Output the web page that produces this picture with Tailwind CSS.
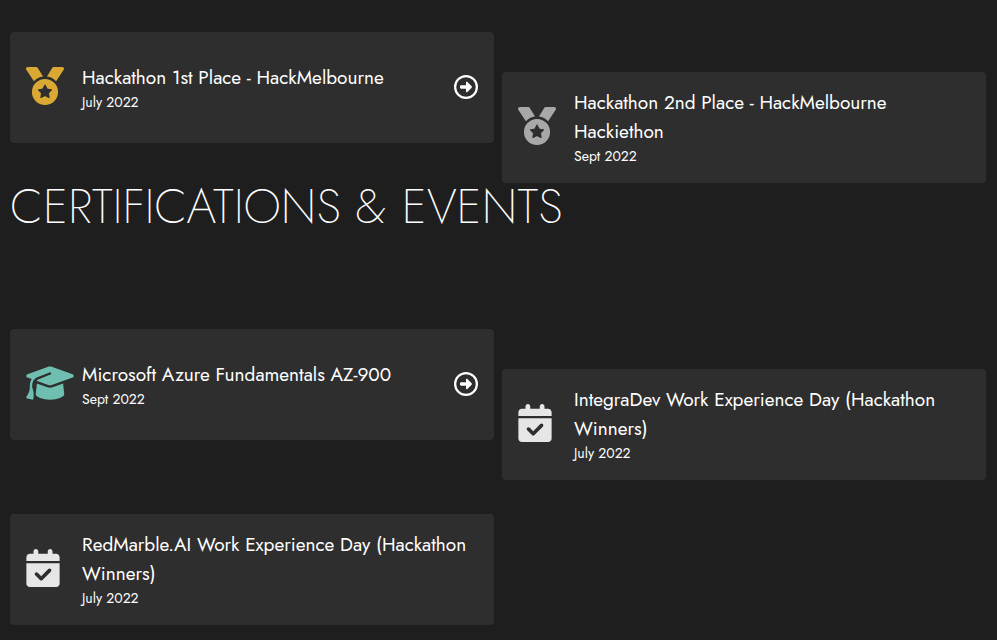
<!DOCTYPE html>
<html lang="en">
<head>
<meta charset="utf-8">
<meta name="viewport" content="width=device-width, initial-scale=1">
<title>Certifications &amp; Events</title>
<script src="https://cdn.jsdelivr.net/npm/@tailwindcss/browser@4"></script>
</head>
<body class="min-h-screen bg-[#1e1e1e] font-[Jost,Lato,sans-serif] text-white">
<svg class="hidden" aria-hidden="true">
  <symbol id="medal" viewBox="0 0 512 512"><path d="M4.1 38.2C1.4 34.2 0 29.4 0 24.6C0 11 11 0 24.6 0H133.9c11.2 0 21.7 5.9 27.4 15.5l68.5 114.1c-48.2 6.1-91.3 28.6-123.4 61.9L4.1 38.2zm503.7 0L405.6 191.5c-32.1-33.3-75.2-55.8-123.4-61.9L350.7 15.5C356.5 5.9 366.9 0 378.1 0H487.4C501 0 512 11 512 24.6c0 4.8-1.4 9.6-4.1 13.6zM80 336a176 176 0 1 1 352 0A176 176 0 1 1 80 336zm184.4-94.9c-3.4-7-13.3-7-16.8 0l-22.4 45.4c-1.4 2.8-4 4.7-7 5.1L168 298.9c-7.7 1.1-10.7 10.5-5.2 16l36.3 35.4c2.2 2.2 3.2 5.2 2.7 8.3l-8.6 49.9c-1.3 7.6 6.7 13.5 13.6 9.9l44.8-23.6c2.7-1.4 6-1.4 8.7 0l44.8 23.6c6.9 3.6 14.9-2.2 13.6-9.9l-8.6-49.9c-.5-3 .5-6.1 2.7-8.3l36.3-35.4c5.6-5.4 2.5-14.8-5.2-16l-50.1-7.3c-3-.4-5.7-2.4-7-5.1l-22.4-45.4z"/></symbol>
  <symbol id="cap" viewBox="0 0 640 512"><path d="M320 32c-8.1 0-16.1 1.4-23.7 4.1L15.8 137.4C6.3 140.9 0 149.9 0 160s6.3 19.1 15.8 22.6l57.9 20.9C57.3 229.3 48 259.8 48 291.9v28.1c0 28.4-10.8 57.7-22.3 80.8c-6.5 13-13.9 25.8-22.5 37.6C0 442.7-.9 448.3 .9 453.4s6 8.9 11.2 10.2l64 16c4.2 1.1 8.7 .3 12.4-2s6.3-6.1 7.1-10.4c8.6-42.8 4.3-81.2-2.1-108.7C90.3 344.3 86 329.8 80 316.5V291.9c0-30.2 10.2-58.7 27.9-81.5c12.9-15.5 29.6-28 49.2-35.7l157-61.7c8.2-3.2 17.5 .8 20.7 9s-.8 17.5-9 20.7l-157 61.7c-12.4 4.9-23.3 12.4-32.2 21.6l159.6 57.6c7.6 2.7 15.6 4.1 23.7 4.1s16.1-1.4 23.7-4.1L624.2 182.6c9.5-3.4 15.8-12.5 15.8-22.6s-6.3-19.1-15.8-22.6L343.7 36.1C336.1 33.4 328.1 32 320 32zM128 408c0 35.3 86 72 192 72s192-36.7 192-72L496.7 262.6 354.5 314c-11.1 4-22.8 6-34.5 6s-23.5-2-34.5-6L143.3 262.6 128 408z"/></symbol>
  <symbol id="calendar" viewBox="0 0 448 512"><path d="M128 0c17.7 0 32 14.3 32 32V64H288V32c0-17.7 14.3-32 32-32s32 14.3 32 32V64h48c26.5 0 48 21.5 48 48v48H0V112C0 85.5 21.5 64 48 64H96V32c0-17.7 14.3-32 32-32zM0 192H448V464c0 26.5-21.5 48-48 48H48c-26.5 0-48-21.5-48-48V192zM329 305c9.4-9.4 9.4-24.6 0-33.9s-24.6-9.4-33.9 0l-95 95-47-47c-9.4-9.4-24.6-9.4-33.9 0s-9.4 24.6 0 33.9l64 64c9.4 9.4 24.6 9.4 33.9 0L329 305z"/></symbol>
  <symbol id="arrow" viewBox="0 0 512 512"><path d="M464 256A208 208 0 1 1 48 256a208 208 0 1 1 416 0zM0 256a256 256 0 1 0 512 0A256 256 0 1 0 0 256zM286 151.200c-6.600-7.100-14.200-9.200-21-5.300c-6 3.500-9 10-9 19V220H152C138.800 220 128 230.800 128 244v24C128 281.200 138.800 292 152 292h104v55c0 9 3 15.500 9 19c6.800 3.900 14.400 1.800 21-5.300l91-89c8-8 8-23.400 0-31.400z"/></symbol>
</svg>
<main class="pt-8 pr-[11px] pb-3 pl-[10px]">
  <section aria-label="Awards" class="grid grid-cols-2 gap-x-2 gap-y-[74px]">
    <article class="flex items-center gap-2 rounded bg-[#2e2e2e] p-4">
      <div class="w-12 shrink-0 pb-1 text-[#d9a934]"><svg class="h-[38px] w-[38px] fill-current" aria-hidden="true"><use href="#medal"/></svg></div>
      <div class="min-w-0 flex-1">
        <h3 class="text-[19px] leading-[29px]">Hackathon 1st Place - HackMelbourne</h3>
        <p class="text-sm leading-[21px]">July 2022</p>
      </div>
      <a href="#" aria-label="Open Hackathon 1st Place" class="shrink-0 pb-px"><svg class="h-6 w-6 fill-current" aria-hidden="true"><use href="#arrow"/></svg></a>
    </article>
    <article class="mt-10 -mb-10 flex items-center gap-2 rounded bg-[#2e2e2e] p-4">
      <div class="w-12 shrink-0 pb-1 text-[#a8a8a8]"><svg class="h-[38px] w-[38px] fill-current" aria-hidden="true"><use href="#medal"/></svg></div>
      <div class="min-w-0 flex-1">
        <h3 class="text-[19px] leading-[29px]">Hackathon 2nd Place - HackMelbourne Hackiethon</h3>
        <p class="text-sm leading-[21px]">Sept 2022</p>
      </div>
    </article>
  </section>
  <h2 class="relative pt-[34px] pb-[92px] text-5xl leading-[60px] font-extralight">CERTIFICATIONS &amp; EVENTS</h2>
  <section aria-label="Certifications and events" class="grid grid-cols-2 gap-x-2 gap-y-[74px]">
    <article class="flex items-center gap-2 rounded bg-[#2e2e2e] p-4">
      <div class="w-12 shrink-0 pb-1 text-[#6fbfb0]"><svg class="h-[38px] w-12 fill-current" aria-hidden="true"><use href="#cap"/></svg></div>
      <div class="min-w-0 flex-1">
        <h3 class="text-[19px] leading-[29px]">Microsoft Azure Fundamentals AZ-900</h3>
        <p class="text-sm leading-[21px]">Sept 2022</p>
      </div>
      <a href="#" aria-label="Open Microsoft Azure Fundamentals" class="shrink-0 pb-px"><svg class="h-6 w-6 fill-current" aria-hidden="true"><use href="#arrow"/></svg></a>
    </article>
    <article class="mt-10 -mb-10 flex items-center gap-2 rounded bg-[#2e2e2e] p-4">
      <div class="w-12 shrink-0 pb-1 text-[#e6e6e6]"><svg class="h-[38px] w-[34px] fill-current" aria-hidden="true"><use href="#calendar"/></svg></div>
      <div class="min-w-0 flex-1">
        <h3 class="text-[19px] leading-[29px]">IntegraDev Work Experience Day (Hackathon Winners)</h3>
        <p class="text-sm leading-[21px]">July 2022</p>
      </div>
    </article>
    <article class="flex items-center gap-2 rounded bg-[#2e2e2e] p-4">
      <div class="w-12 shrink-0 pb-1 text-[#e6e6e6]"><svg class="h-[38px] w-[34px] fill-current" aria-hidden="true"><use href="#calendar"/></svg></div>
      <div class="min-w-0 flex-1">
        <h3 class="text-[19px] leading-[29px]">RedMarble.AI Work Experience Day (Hackathon Winners)</h3>
        <p class="text-sm leading-[21px]">July 2022</p>
      </div>
    </article>
  </section>
</main>
</body>
</html>
